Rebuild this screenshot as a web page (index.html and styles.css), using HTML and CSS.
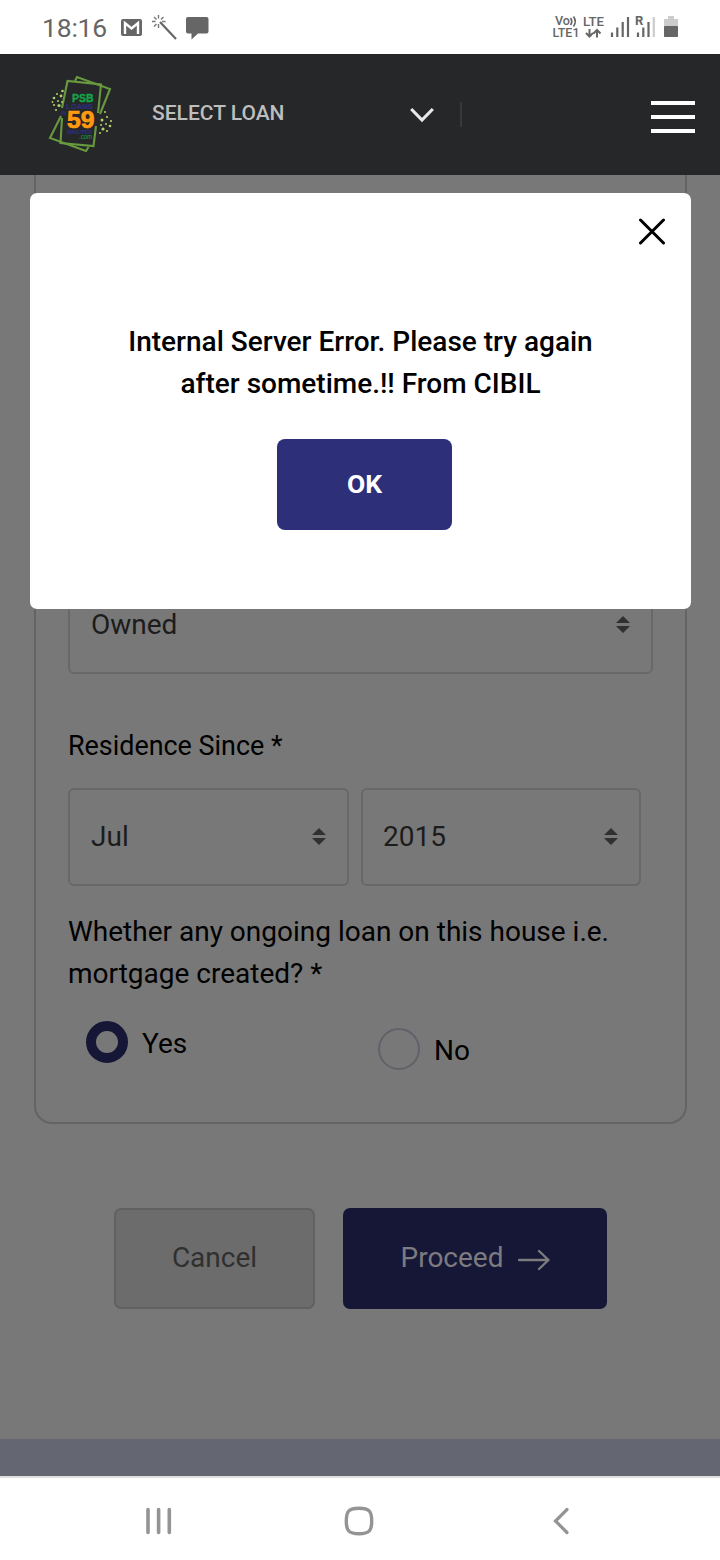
FILE: index.html
```html
<!DOCTYPE html>
<html lang="en">
<head>
<meta charset="utf-8">
<title>PSB Loans in 59 Minutes</title>
<link rel="stylesheet" href="styles.css">
</head>
<body>
<div class="phone">
  <div class="status">
    <span class="clock">18:16</span>
    <svg class="status-left" width="94" height="30" viewBox="0 0 94 30">
      <rect x="1" y="7" width="21" height="17" rx="2" fill="#666"/>
      <path d="M5 22V11l6.500 5.500L18 11v11" fill="none" stroke="#fff" stroke-width="2.400"/>
      <path d="M40 10l16 17" stroke="#666" stroke-width="2.200"/>
      <path d="M38.500 3v3.500M38.500 12v4M32 9.500h3.500M42 9.500h3.500M34 5l2.500 2.500M43.500 5L41 7.500M34 14.500l2.500-2.500" stroke="#777" stroke-width="1.400"/>
      <path d="M68 5h18.500q2 0 2 2v12.500q0 2-2 2H78l-6.500 6v-6H68q-2 0-2-2V7q0-2 2-2z" fill="#666"/>
    </svg>
    <svg class="status-right" width="130" height="36" viewBox="550 9 130 36">
      <g fill="#666" font-family="Roboto, sans-serif" font-weight="500" font-size="13.500">
        <text x="555" y="25" font-size="12.500" textLength="15" lengthAdjust="spacingAndGlyphs">Vo</text>
        <text x="552.500" y="37" textLength="27" lengthAdjust="spacingAndGlyphs">LTE1</text>
        <text x="583" y="26" textLength="21" lengthAdjust="spacingAndGlyphs">LTE</text>
        <text x="635" y="25" font-size="13" font-weight="700">R</text>
      </g>
      <path d="M570.500 18q2.500 3.500 0 7M573.500 16.500q3.500 5 0 10" fill="none" stroke="#666" stroke-width="1.700"/>
      <path d="M589.500 29v7M586 33l3.500 3.500 3.500-3.500M597 37.500v-7M593.500 33.500L597 30l3.500 3.500" fill="none" stroke="#666" stroke-width="2"/>
      <path d="M612 32.500V37M617.300 27.500V37M622.700 22V37M628 17V37M638 32.500V37M643.300 27.500V37M648.500 22V37" stroke="#666" stroke-width="2.200"/>
      <path d="M653.800 17V37" stroke="#ccc" stroke-width="2.200"/>
      <path d="M668 16h6v3h4v18h-14V19h4z" fill="#ccc"/>
      <rect x="664" y="26" width="14" height="11" rx="1" fill="#666"/>
    </svg>
  </div>

  <header class="topbar">
    <svg class="logo" width="90" height="96" viewBox="0 0 90 96">
      <g fill="none" stroke="#69993f" stroke-width="2.100">
        <path d="M22 42L27.500 15 61 18.500 58 47M56 60L53.500 80 20.500 77 22 52"/>
        <path d="M35 15L37 11 70 23 60 48M21 50L10 72 46 85 48.500 81"/>
      </g>
      <g fill="#b4cf65">
        <circle cx="22.500" cy="25" r="1.300"/><circle cx="17" cy="28" r="1"/><circle cx="21" cy="30" r="1.400"/><circle cx="14" cy="32" r="1.300"/><circle cx="18" cy="35" r="1"/><circle cx="22" cy="36" r="1"/><circle cx="14" cy="39" r="1.100"/><circle cx="19" cy="39.500" r="1.600"/><circle cx="16" cy="44" r="1.100"/><circle cx="12.500" cy="36" r=".9"/>
        <circle cx="65" cy="46" r="1"/><circle cx="67" cy="51" r="1.100"/><circle cx="62" cy="54" r="1.500"/><circle cx="71" cy="55" r="1.100"/><circle cx="66" cy="58" r="1"/><circle cx="61" cy="59" r="1"/><circle cx="70" cy="60" r="1.300"/><circle cx="63" cy="63" r="1.600"/><circle cx="67" cy="65" r="1.100"/><circle cx="60" cy="67" r="1"/>
      </g>
      <g font-family="Liberation Sans, sans-serif" font-weight="700">
        <text x="32" y="36" font-size="10.500" fill="#17a348" stroke="#17a348" stroke-width=".4" textLength="21.500" lengthAdjust="spacingAndGlyphs">PSB</text>
        <text x="26" y="42.500" font-size="7" fill="#2d2f80" textLength="27" lengthAdjust="spacingAndGlyphs">LOANS</text>
        <text x="21" y="48.500" font-size="5" fill="#2d2f80">IN</text>
        <text x="27" y="61.800" font-size="23" fill="#ff9a0e" stroke="#ff9a0e" stroke-width=".7" textLength="27.500" lengthAdjust="spacingAndGlyphs">59</text>
        <text x="27" y="67.500" font-size="5.500" fill="#2d2f80" textLength="25" lengthAdjust="spacingAndGlyphs">MINUTES</text>
        <text x="39" y="73" font-size="7" font-weight="400" fill="#17a348" textLength="13" lengthAdjust="spacingAndGlyphs">.com</text>
      </g>
    </svg>
    <span class="select-loan">SELECT LOAN</span>
    <svg class="chevron" width="24" height="18" viewBox="0 0 24 18"><path d="M1.200 2L12 13 22.800 2" fill="none" stroke="#e8e8e8" stroke-width="3.200"/></svg>
    <span class="divider"></span>
    <span class="menu"><i></i><i></i><i></i></span>
  </header>

  <main class="content">
    <section class="card">
      <div class="field wide"><span>Owned</span><svg class="sort" width="14" height="18" viewBox="0 0 14 18"><path d="M0 7L7 0l7 7zM0 10h14L7 17z" fill="#2e3032"/></svg></div>
      <p class="label since">Residence Since *</p>
      <div class="row">
        <div class="field month"><span>Jul</span><svg class="sort" width="14" height="18" viewBox="0 0 14 18"><path d="M0 7L7 0l7 7zM0 10h14L7 17z" fill="#2e3032"/></svg></div>
        <div class="field year"><span>2015</span><svg class="sort" width="14" height="18" viewBox="0 0 14 18"><path d="M0 7L7 0l7 7zM0 10h14L7 17z" fill="#2e3032"/></svg></div>
      </div>
      <p class="label question">Whether any ongoing loan on this house i.e.<br>mortgage created? *</p>
      <div class="options">
        <div class="option yes"><i class="radio on"></i><span>Yes</span></div>
        <div class="option no"><i class="radio"></i><span>No</span></div>
      </div>
    </section>
    <div class="actions">
      <div class="btn cancel">Cancel</div>
      <div class="btn proceed"><span>Proceed</span><svg width="32" height="22" viewBox="0 0 32 22"><path d="M1 11h29M21 2l9.500 9L21 20" fill="none" stroke="#7b7b80" stroke-width="2.400" stroke-linecap="round" stroke-linejoin="round"/></svg></div>
    </div>
  </main>
  <div class="footer"></div>

  <nav class="nav">
    <svg width="26" height="28" viewBox="0 0 26 28"><path d="M2 2.500v23M12.600 2.500v23M23.300 2.500v23" stroke="#949494" stroke-width="3.600" stroke-linecap="round"/></svg>
    <svg class="home" width="30" height="30" viewBox="0 0 30 30"><path d="M15 2.300C25 2.300 27.700 5 27.700 15S25 27.700 15 27.700 2.300 25 2.300 15 5 2.300 15 2.300z" fill="none" stroke="#949494" stroke-width="3.400"/></svg>
    <svg width="18" height="28" viewBox="0 0 18 28"><path d="M15 2.500L3.500 14 15 25.500" fill="none" stroke="#949494" stroke-width="3.200" stroke-linecap="round"/></svg>
  </nav>

  <div class="modal">
    <div class="modal-head"><svg width="28" height="28" viewBox="0 0 28 28"><path d="M2.500 2l23 23M25.500 2l-23 23" stroke="#000" stroke-width="3" stroke-linecap="round"/></svg></div>
    <p class="message">Internal Server Error. Please try again<br>after sometime.!! From CIBIL</p>
    <div class="ok">OK</div>
  </div>
</div>
</body>
</html>
```
FILE: styles.css
```css
* { box-sizing: border-box; }
body { margin: 0; font-family: Roboto, sans-serif; }
p { margin: 0; }
svg { display: block; flex: none; }
.phone { position: relative; width: 720px; height: 1560px; overflow: hidden; background: #fff; }

.status { height: 54px; display: flex; align-items: center; padding: 0 40px 0 42px; }
.clock { width: 78px; font-size: 26.5px; line-height: 32px; color: #666; letter-spacing: -.2px; padding-top: 2px; white-space: nowrap; }
.status-right { margin-left: auto; }

.topbar { height: 121px; background: #252729; display: flex; align-items: center; padding: 0 25px 0 40px; }
.logo { width: 90px; margin-bottom: 1px; }
.select-loan { width: 258px; margin-left: 22px; font-size: 21px; font-weight: 500; line-height: 28px; color: #bebebe; margin-bottom: 3px; }
.chevron { margin-top: 2px; }
.divider { width: 2px; height: 25px; margin-left: 26px; background: #36383a; }
.menu { display: flex; flex-direction: column; gap: 10px; margin-left: auto; margin-top: 5px; }
.menu i { width: 44px; height: 4px; background: #fff; }

.content { height: 1264px; background: #787878; padding: 0 33px 0 34px; }
.card { height: 949px; border: 2px solid #646464; border-top: 0; border-radius: 0 0 18px 18px; padding: 401px 32px 0; }
.field { height: 98px; border: 2px solid #686868; border-radius: 6px; display: flex; align-items: center; justify-content: space-between; padding: 0 21px; font-size: 28px; line-height: 42px; color: #1c1c1c; }
.wide { width: 585px; }
.label { font-size: 28px; line-height: 42px; color: #000; }
.since { margin-top: 51px; font-size: 26.9px; }
.row { display: flex; gap: 12px; margin-top: 21px; }
.month { width: 281px; }
.year { width: 280px; padding-left: 20px; }
.question { margin-top: 25px; white-space: nowrap; }
.options { display: flex; padding-left: 18px; margin-top: 26px; font-size: 28px; line-height: 42px; color: #000; }
.option { display: flex; flex: none; gap: 14px; height: 42px; }
.option span { padding-top: 2px; }
.yes { width: 292px; }
.no { margin-top: 7px; }
.radio { width: 42px; height: 42px; border-radius: 50%; border: 2px solid #606269; flex: none; }
.on { border: 10px solid #161736; }
.actions { display: flex; gap: 28px; margin-top: 84px; padding-left: 80px; }
.btn { height: 101px; border-radius: 7px; padding-bottom: 2px; font-size: 28px; line-height: 42px; display: flex; align-items: center; justify-content: center; }
.cancel { width: 201px; border: 2px solid #616161; background: #6c6c6c; color: #303030; }
.proceed { width: 264px; background: #161736; color: #7b7b80; gap: 14px; }
.proceed svg { margin-top: 5px; }
.footer { height: 37px; background: #646671; }

.nav { height: 84px; border-top: 2px solid #dfdfdf; background: #fff; display: flex; align-items: center; justify-content: space-between; padding: 3px 150px 0 146px; }
.home { margin-right: 6px; }

.modal { position: absolute; left: 30px; top: 192.5px; width: 661px; height: 416.5px; border-radius: 7px; background: #fff; display: flex; flex-direction: column; align-items: center; }
.modal-head { align-self: stretch; display: flex; justify-content: flex-end; padding: 25px 25px 0 0; height: 128px; }
.message { font-size: 28px; font-weight: 500; line-height: 42px; color: #000; text-align: center; white-space: nowrap; }
.ok { width: 175px; height: 91px; margin: 34.5px 0 0 8px; border-radius: 8px; background: #2d2f78; color: #fff; font-size: 26.5px; font-weight: 700; display: flex; align-items: center; justify-content: center; padding-bottom: 2px; }
```
